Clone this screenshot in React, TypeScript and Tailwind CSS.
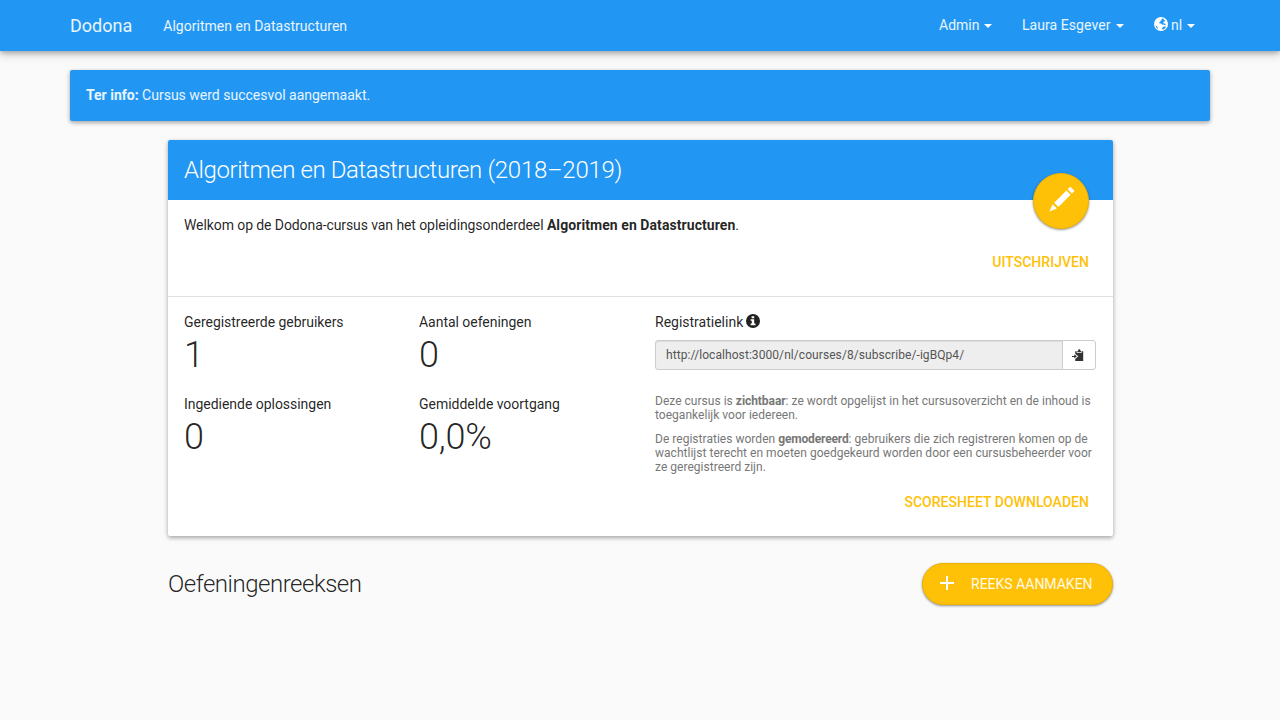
import type { ReactNode } from "react";

function Caret() {
  return <span className="mt-px ml-auto border-x-4 border-t-4 border-x-transparent border-t-white" />;
}

function GlobeIcon() {
  return (
    <svg viewBox="0 0 14 14" className="mr-[3px] mb-[2px] size-[14px]">
      <circle cx="7" cy="7" r="7" fill="#fff" />
      <path
        fill="#2196f3"
        d="M8.4 1.4 10 2 9.4 3.2 10.6 3 11.4 4.2 10 4.4 9.2 5.6 10 6.8 11.2 6.6 12 7.6 10.6 8 9.6 7.6 8.4 7.8 7.2 6.6 5.6 6.4 5.2 5.2 6.4 4.8 6.6 3.6 7.8 3.2 7.4 2.2ZM9.4 9.4 11 9.8 12 9.2 11.4 11 10 12.2 8.6 12.4 8 11.4ZM1.4 8.4 2.8 9.2 3.6 10.8 4.2 12.2 2.4 10.8Z"
      />
    </svg>
  );
}

function InfoIcon() {
  return (
    <svg viewBox="0 0 14 14" className="mb-[2px] ml-[3px] size-[14px]">
      <circle cx="7" cy="7" r="7" fill="#212121" />
      <path fill="#fff" d="M5.6 2.2h2.6v2H5.6zM4.6 5.2h3.6v4.4h1.3v1.6H4.6V9.6h1.2V6.8H4.6z" />
    </svg>
  );
}

function PencilIcon() {
  return (
    <svg viewBox="0 0 24 24" className="size-6 overflow-visible" fill="#fff">
      <path d="M17.7 2.3 19.7.3Q20.4-.3 21.1.4L24 3.3Q24.6 4 24 4.6L21.9 6.6ZM16.4 3.6 20.6 7.8 8.4 20 4.2 15.8ZM2.6 17.2 6.9 21.5-.6 24.4Z" />
    </svg>
  );
}

function ClipboardIcon() {
  return (
    <svg viewBox="0 0 12 12" className="mr-[2px] mb-px size-3" fill="#333">
      <path d="M3.2 2.2h1.5v1.7h5V2.2h1.5V12H3.2V10l3.1-2.7-3.1-2.6z" />
      <path d="M5.3 3.2V2.2L6.2 1.6V.8L6.9.2H7.6L8.3.8V1.6L9.2 2.2V3.2z" />
      <path d="M0 6.9h2.3V5.3l2.6 2-2.6 2.1V8.1H0z" />
    </svg>
  );
}

function NavItem({ width, children }: { width: string; children: ReactNode }) {
  return <a className={`flex h-5 items-center leading-5 ${width}`}>{children}</a>;
}

function Stat({ label, value }: { label: string; value: string }) {
  return (
    <div className="h-[82px] px-[15px]">
      <div className="leading-5 tracking-[-0.03px]">{label}</div>
      <div className="text-[36px] leading-[46px] font-light tracking-[-0.2px]">{value}</div>
    </div>
  );
}

export default function App() {
  return (
    <div className="min-h-screen bg-[#fafafa] font-['Roboto',sans-serif] text-[14px] leading-5 text-black/87">
      <nav className="h-[51px] bg-[#2196f3] text-white/90 shadow-[0_2px_5px_0_rgba(0,0,0,0.26),0_4px_10px_0_rgba(0,0,0,0.14)]">
        <div className="mx-auto flex h-full w-[1140px] justify-between">
          <div className="flex">
            <span className="pt-4 text-[18px] leading-5">Dodona</span>
            <span className="pt-4 pl-[31px] leading-5 tracking-[0.02px]">Algoritmen en Datastructuren</span>
          </div>
          <div className="flex gap-[30px] pt-[15px] pr-[15px]">
            <NavItem width="w-[53px]">Admin<Caret /></NavItem>
            <NavItem width="w-[102px] tracking-[0.06px]">Laura Esgever<Caret /></NavItem>
            <NavItem width="w-[41px]"><GlobeIcon />nl<Caret /></NavItem>
          </div>
        </div>
      </nav>

      <div className="mx-auto mt-[19px] h-[51px] w-[1140px] rounded-[2px] bg-[#2196f3] px-4 py-[15px] text-white/90 shadow-[0_2px_4px_0_rgba(0,0,0,0.26),0_1px_5px_0_rgba(0,0,0,0.12)]">
        <strong className="font-bold">Ter info:</strong> Cursus werd succesvol aangemaakt.
      </div>

      <main className="mt-[19px] ml-[168px] w-[945px]">
        <section className="relative h-[396px] rounded-[2px] bg-white shadow-[0_2px_4px_0_rgba(0,0,0,0.26),0_1px_5px_0_rgba(0,0,0,0.12)]">
          <header className="h-[60px] rounded-t-[2px] bg-[#2196f3] px-4 pt-4 text-white">
            <h1 className="text-[24px] leading-7 font-light tracking-[-0.37px]">
              <span className="tracking-[-0.42px]">Algoritmen en Datastructuren</span>{" "}
              <span className="tracking-[-0.26px]">(2018–2019)</span>
            </h1>
          </header>
          <button className="absolute top-[33px] right-6 flex size-14 items-center justify-center rounded-full border border-[#ecb205] bg-[#ffc107] pl-px pb-[4px] shadow-[0_1px_3px_0_rgba(0,0,0,0.26),0_1px_2px_0_rgba(0,0,0,0.2)]">
            <PencilIcon />
          </button>
          <div className="h-[97px] border-b border-[#e0e0e0] px-4 pt-[15px]">
            <p className="tracking-[-0.09px]">
              Welkom op de Dodona-cursus van het opleidingsonderdeel <strong className="font-bold tracking-[0.07px]">Algoritmen en Datastructuren</strong>.
            </p>
            <div className="mt-[17px] pr-2 text-right font-medium tracking-[0.04px] text-[#ffc107]">UITSCHRIJVEN</div>
          </div>
          <div className="grid grid-cols-4 px-px pt-[15px]">
            <div className="col-span-2 grid grid-cols-[235px_236px] content-start">
              <Stat label="Geregistreerde gebruikers" value="1" />
              <Stat label="Aantal oefeningen" value="0" />
              <Stat label="Ingediende oplossingen" value="0" />
              <Stat label="Gemiddelde voortgang" value="0,0%" />
            </div>
            <div className="col-span-2 -ml-[0.5px] pr-4 pl-[15px]">
              <div className="flex h-5 items-center">Registratielink<InfoIcon /></div>
              <div className="mt-2 flex h-[30px] text-[12px] leading-[18px]">
                <div className="flex-1 rounded-l-[3px] border border-[#ccc] bg-[#eee] px-[10px] py-[5px] tracking-[0.07px] text-[#555] shadow-[inset_0_1px_1px_rgba(0,0,0,0.075)]">
                  http://localhost:3000/nl/courses/8/subscribe/-igBQp4/
                </div>
                <button className="-ml-px flex w-[34px] items-center justify-center rounded-r-[3px] border border-[#ccc] bg-white">
                  <ClipboardIcon />
                </button>
              </div>
              <div className="mt-6 text-[12px] leading-[14px] tracking-[0.025px] text-[#777]">
                <p>
                  Deze cursus is <strong className="font-bold tracking-[-0.06px]">zichtbaar</strong>: ze wordt opgelijst in het cursusoverzicht en de inhoud is toegankelijk voor iedereen.
                </p>
                <p className="mt-[10px]">
                  De registraties worden <strong className="font-bold tracking-[-0.15px]">gemodereerd</strong>: gebruikers die zich registreren komen op de wachtlijst terecht en moeten goedgekeurd worden door een cursusbeheerder voor ze geregistreerd zijn.
                </p>
              </div>
            </div>
          </div>
          <div className="mt-4 pr-6 text-right font-medium tracking-[0.03px] text-[#ffc107]">SCORESHEET DOWNLOADEN</div>
        </section>

        <div className="mt-[27px] flex items-start justify-between">
          <h2 className="pt-[7px] text-[24px] leading-7 font-light tracking-[-0.48px]">Oefeningenreeksen</h2>
          <button className="flex h-[42px] w-[191px] items-center rounded-[21px] border border-[#ecb205] bg-[#ffc107] pl-[17px] text-white/90 shadow-[0_1px_3px_0_rgba(0,0,0,0.26),0_1px_2px_0_rgba(0,0,0,0.2)]">
            <svg viewBox="0 0 14 14" className="mr-[17px] mb-[2px] size-[14px]" fill="#fff">
              <path d="M6 0h2v6h6v2H8v6H6V8H0V6h6z" />
            </svg>
            REEKS AANMAKEN
          </button>
        </div>
      </main>
    </div>
  );
}
